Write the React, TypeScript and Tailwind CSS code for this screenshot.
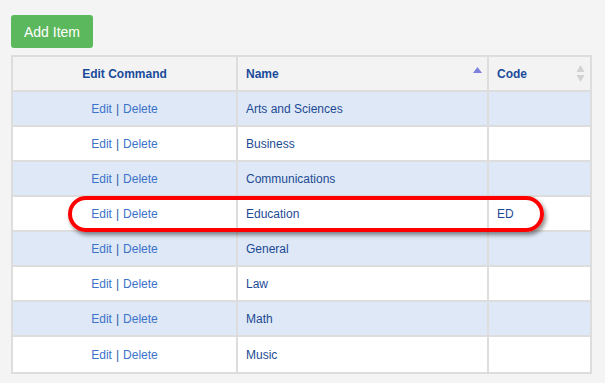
import React from 'react'

const rows = [
  { name: 'Arts and Sciences', code: '' },
  { name: 'Business', code: '' },
  { name: 'Communications', code: '' },
  { name: 'Education', code: 'ED' },
  { name: 'General', code: '' },
  { name: 'Law', code: '' },
  { name: 'Math', code: '' },
  { name: 'Music', code: '' },
]

const cols = 'grid grid-cols-[223px_2px_249px_2px_101px]'

function SortUp() {
  return (
    <svg width="9" height="6" viewBox="0 0 9 6" className="block">
      <path d="M4.5 0 L9 6 L0 6 Z" fill="#7c80dc" />
    </svg>
  )
}

function SortBoth() {
  return (
    <svg width="9" height="17" viewBox="0 0 9 17" className="block">
      <path d="M4.5 0 L8.5 7 L0.5 7 Z" fill="#d2d2d2" />
      <path d="M0.5 10 L8.5 10 L4.5 17 Z" fill="#d2d2d2" />
    </svg>
  )
}

export default function App() {
  return (
    <div
      className="relative w-[605px] h-[383px] bg-[#f4f4f4] overflow-hidden"
      style={{ fontFamily: '"Liberation Sans", Arial, sans-serif' }}
    >
      <div className="pt-[15px] pl-[11px]">
        <button className="h-[33px] w-[82px] rounded-[3px] bg-[#5cb85c] text-white text-[14px] text-center pt-[1px]">
          Add Item
        </button>

        {/* Table */}
        <div className="mt-[7px] w-[581px] border-2 border-[#dddddd] bg-white text-[12px]">
          <div className={`${cols} h-[35px] bg-[#f3f3f3] border-b-2 border-[#dddddd] font-bold text-[#1a4b9b]`}>
            <div className="flex items-center justify-center">Edit Command</div>
            <div className="bg-[#dddddd]" />
            <div className="flex items-center justify-between pl-[8px] pr-[5px]">
              <span>Name</span>
              <div className="-mt-[8px]">
                <SortUp />
              </div>
            </div>
            <div className="bg-[#dddddd]" />
            <div className="flex items-center justify-between pl-[8px] pr-[5px]">
              <span>Code</span>
              <SortBoth />
            </div>
          </div>

          {rows.map((r, i) => (
            <div
              key={r.name}
              className={`${cols} h-[35px] ${i < rows.length - 1 ? 'border-b-2 border-[#dddddd]' : 'h-[33px]'} ${
                i % 2 === 0 ? 'bg-[#dfe8f6]' : 'bg-white'
              }`}
            >
              <div className="flex items-center justify-center text-[#3b73c9]">
                <span>Edit</span>
                <span className="mx-[4px] text-[#2d5ca6]">|</span>
                <span>Delete</span>
              </div>
              <div className="bg-[#dddddd]" />
              <div className="flex items-center pl-[8px] text-[#1c4a94]">{r.name}</div>
              <div className="bg-[#dddddd]" />
              <div className="flex items-center pl-[8px] text-[#1c4a94]">{r.code}</div>
            </div>
          ))}
        </div>
      </div>

      {/* highlight */}
      <div className="absolute left-[68px] top-[196px] w-[476px] h-[36px] rounded-full border-[4px] border-[#ff0000] shadow-[2px_3px_4px_rgba(0,0,0,0.45)]" />
    </div>
  )
}
